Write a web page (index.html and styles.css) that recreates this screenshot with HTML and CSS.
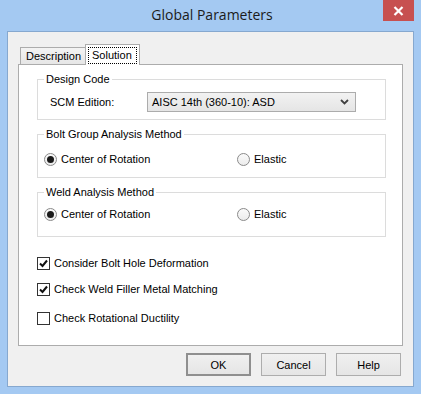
FILE: index.html
```html
<!DOCTYPE html>
<html lang="en">
<head>
    <meta charset="UTF-8">
    <meta name="viewport" content="width=device-width, initial-scale=1.0">
    <title>Global Parameters</title>
    <link rel="stylesheet" href="styles.css">
</head>
<body>
    <div class="window">
        <div class="titlebar">
            <span class="title">Global Parameters</span>
            <div class="close">
                <svg width="11" height="10" viewBox="0 0 11 10">
                    <path d="M1.5 1 L9.5 9 M9.5 1 L1.5 9" stroke="#fff" stroke-width="2.2" fill="none"/>
                </svg>
            </div>
        </div>

        <div class="client">
            <div class="tabs">
                <div class="tab">Description</div>
                <div class="tab active"><span class="focus">Solution</span></div>
            </div>

            <div class="panel">
                <div class="group group-code">
                    <span class="group-title">Design Code</span>
                    <div class="row">
                        <span class="label">SCM Edition:</span>
                        <div class="select">
                            <span>AISC 14th (360-10): ASD</span>
                            <svg width="9" height="6" viewBox="0 0 9 6">
                                <path d="M1 1 L4.5 4.5 L8 1" stroke="#404040" stroke-width="1.8" fill="none"/>
                            </svg>
                        </div>
                    </div>
                </div>

                <div class="group group-bolt">
                    <span class="group-title">Bolt Group Analysis Method</span>
                    <div class="options">
                        <label class="option"><span class="radio on"></span>Center of Rotation</label>
                        <label class="option"><span class="radio"></span>Elastic</label>
                    </div>
                </div>

                <div class="group group-weld">
                    <span class="group-title">Weld Analysis Method</span>
                    <div class="options">
                        <label class="option"><span class="radio on"></span>Center of Rotation</label>
                        <label class="option"><span class="radio"></span>Elastic</label>
                    </div>
                </div>

                <div class="checks">
                    <label class="check">
                        <span class="box">
                            <svg width="11" height="11" viewBox="0 0 11 11"><path d="M2 5.5 L4.5 8 L9 2.5" stroke="#111" stroke-width="2" fill="none"/></svg>
                        </span>
                        Consider Bolt Hole Deformation
                    </label>
                    <label class="check check-weld">
                        <span class="box">
                            <svg width="11" height="11" viewBox="0 0 11 11"><path d="M2 5.5 L4.5 8 L9 2.5" stroke="#111" stroke-width="2" fill="none"/></svg>
                        </span>
                        Check Weld Filler Metal Matching
                    </label>
                    <label class="check check-duct">
                        <span class="box"></span>
                        Check Rotational Ductility
                    </label>
                </div>
            </div>

            <div class="buttons">
                <button class="btn default">OK</button>
                <button class="btn">Cancel</button>
                <button class="btn">Help</button>
            </div>
        </div>
    </div>
</body>
</html>
```

FILE: styles.css
```css
body, html {
    margin: 0;
    padding: 0;
    background-color: #a4c9f2;
    font-family: "Liberation Sans", Arial, sans-serif;
    font-size: 11px;
    color: #000;
}

.window {
    width: 421px;
    height: 394px;
    background-color: #a4c9f2;
    position: relative;
    box-sizing: border-box;
    padding: 0 7px 7px 7px;
}

.titlebar {
    height: 31px;
    display: flex;
    justify-content: center;
    align-items: center;
}

.title {
    font-family: "Open Sans", "Noto Sans", sans-serif;
    font-size: 14px;
    color: #1b1b1b;
    margin-top: -2px;
    margin-left: 3px;
}

.close {
    position: absolute;
    top: 0;
    right: 7px;
    width: 31px;
    height: 21px;
    background-color: #c75050;
    display: flex;
    justify-content: center;
    align-items: center;
}

.client {
    height: 356px;
    box-sizing: border-box;
    border: 1px solid #86a8cf;
    background-color: #f0f0f0;
    padding: 12px 10px 0 10px;
}

/* tab strip */
.tabs {
    display: flex;
    align-items: flex-end;
    padding-left: 2px;
    height: 20px;
}

.tab {
    height: 17px;
    box-sizing: border-box;
    border: 1px solid #acacac;
    border-bottom: none;
    background: linear-gradient(to bottom, #f3f3f3, #e6e6e6);
    padding: 2px 4px 0 5px;
    line-height: 13px;
}

.tab.active {
    height: 21px;
    margin-left: -1px;
    margin-bottom: -1px;
    background: #fff;
    padding: 2px 2px 0 2px;
    position: relative;
    z-index: 1;
}

.focus {
    display: block;
    border: 1px dotted #000;
    padding: 1px 4px 1px 3px;
}

.panel {
    height: 282px;
    box-sizing: border-box;
    border: 1px solid #acacac;
    background-color: #fff;
    padding: 14px 16px 0 18px;
}

/* group boxes */
.group {
    position: relative;
    border: 1px solid #dcdcdc;
    box-sizing: border-box;
    margin-bottom: 14px;
}

.group-title {
    position: absolute;
    top: -7px;
    left: 6px;
    padding: 0 2px;
    background-color: #fff;
    line-height: 13px;
}

.group-code {
    height: 41px;
    padding: 12px 0 0 12px;
}

.group-bolt {
    height: 44px;
    padding-top: 18px;
}

.group-weld {
    height: 45px;
    padding-top: 15px;
}

.row {
    display: flex;
    align-items: center;
}

.label {
    width: 97px;
}

.select {
    width: 209px;
    height: 20px;
    box-sizing: border-box;
    border: 1px solid #acacac;
    background: linear-gradient(to bottom, #f2f2f2, #e5e5e5);
    display: flex;
    align-items: center;
    justify-content: space-between;
    padding: 0 6px 0 4px;
}

.options {
    display: grid;
    grid-template-columns: 193px auto;
    padding-left: 6px;
}

.option {
    display: flex;
    align-items: center;
    gap: 4px;
    line-height: 13px;
}

.radio {
    width: 13px;
    height: 13px;
    box-sizing: border-box;
    border: 1px solid #8a8a8a;
    border-radius: 50%;
    background: linear-gradient(to bottom, #fafafa, #ececec);
    display: flex;
    justify-content: center;
    align-items: center;
}

.radio.on::after {
    content: "";
    width: 7px;
    height: 7px;
    border-radius: 50%;
    background-color: #1a1a1a;
}

/* check boxes */
.checks {
    display: flex;
    flex-direction: column;
    padding-top: 6px;
}

.check {
    display: flex;
    align-items: center;
    gap: 4px;
    line-height: 13px;
}

.check-weld {
    margin-top: 13px;
}

.check-duct {
    margin-top: 16px;
}

.box {
    width: 13px;
    height: 13px;
    box-sizing: border-box;
    border: 1px solid #333;
    background-color: #fff;
    display: flex;
    justify-content: center;
    align-items: center;
}

/* dialog buttons */
.buttons {
    display: flex;
    justify-content: flex-end;
    gap: 10px;
    padding-top: 7px;
    padding-right: 2px;
}

.btn {
    width: 65px;
    height: 23px;
    box-sizing: border-box;
    border: 1px solid #adadad;
    background: linear-gradient(to bottom, #f0f0f0, #e5e5e5);
    font-family: "Liberation Sans", Arial, sans-serif;
    font-size: 11px;
    color: #000;
    padding: 0;
}

.btn.default {
    border: 2px solid #8f8f8f;
}
```
